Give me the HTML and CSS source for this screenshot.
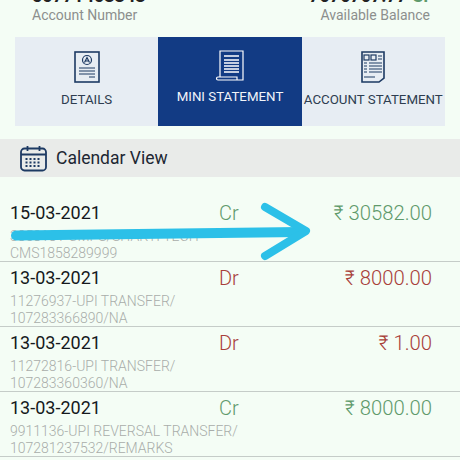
FILE: index.html
```html
<!DOCTYPE html>
<html>
<head>
  <title>Mini Statement</title>
  <link rel="stylesheet" href="styles.css">
</head>
<body>
  <div id="account-info">
    <div class="info-left">
      <div class="info-value">50771403343</div>
      <div class="info-label">Account Number</div>
    </div>
    <div class="info-right">
      <div class="info-value">7676767.77 <span class="green">Cr</span></div>
      <div class="info-label">Available Balance</div>
    </div>
  </div>

  <div id="tabs">
    <div class="tab">
      <svg class="tab-icon" width="26" height="32" viewBox="0 0 26 32" fill="none" stroke="#1d3a63" stroke-width="1.2">
        <rect x="1" y="1" width="24" height="30" stroke-width="1.6"/>
        <circle cx="13" cy="9" r="4.5"/>
        <path d="M10.500 11.500l2.500-5 2.500 5M11.500 10h3"/>
        <path d="M5 17h16M5 20h16M5 23h16M15 26h6"/>
      </svg>
      <div class="tab-label">DETAILS</div>
    </div>
    <div class="tab active">
      <svg class="tab-icon" width="30" height="32" viewBox="0 0 30 32" fill="none" stroke="#fff" stroke-width="1.2">
        <path d="M5 27V1h23v29H3a1.500 1.500 0 0 1 0-3h19v3"/>
        <path d="M9 6h15M9 10h15M9 13h15M9 16h15M9 19h15M9 22h15" stroke-width="1.6"/>
      </svg>
      <div class="tab-label">MINI STATEMENT</div>
    </div>
    <div class="tab">
      <svg class="tab-icon" width="24" height="32" viewBox="0 0 24 32" fill="none" stroke="#1d3a63" stroke-width="1.2">
        <path d="M1 1h22v26l-5 4H1z" stroke-width="1.6"/>
        <rect x="3" y="4" width="5" height="5"/>
        <rect x="10" y="4" width="5" height="5"/>
        <path d="M17 5h4M17 8h4M8 12h13M8 15h13M8 18h13M8 21h13M3 12h3M3 15h3M3 18h3M3 21h3M3 26h11"/>
      </svg>
      <div class="tab-label">ACCOUNT STATEMENT</div>
    </div>
  </div>

  <div id="calendar-bar">
    <svg width="27" height="27" viewBox="0 0 27 27" fill="none" stroke="#1d3a63" stroke-width="1.8">
      <rect x="1" y="3.500" width="25" height="22" rx="3.500"/>
      <path d="M1 9.500h25M7.500 1v5M19.500 1v5"/>
      <path d="M5.500 14h16M5.500 17.500h16M5.500 21h16" stroke-width="2" stroke-dasharray="2 2"/>
    </svg>
    <span>Calendar View</span>
  </div>

  <div id="statement">
    <div class="row">
      <div class="row-top">
        <div class="date">15-03-2021</div>
        <div class="type green">Cr</div>
        <div class="amount green">₹ 30582.00</div>
      </div>
      <div class="desc">3858181-CMPS/SHAKTI TECH<br>CMS1858289999</div>
    </div>
    <div class="row">
      <div class="row-top">
        <div class="date">13-03-2021</div>
        <div class="type red">Dr</div>
        <div class="amount red">₹ 8000.00</div>
      </div>
      <div class="desc">11276937-UPI TRANSFER/<br>107283366890/NA</div>
    </div>
    <div class="row">
      <div class="row-top">
        <div class="date">13-03-2021</div>
        <div class="type red">Dr</div>
        <div class="amount red">₹ 1.00</div>
      </div>
      <div class="desc">11272816-UPI TRANSFER/<br>107283360360/NA</div>
    </div>
    <div class="row">
      <div class="row-top">
        <div class="date">13-03-2021</div>
        <div class="type green">Cr</div>
        <div class="amount green">₹ 8000.00</div>
      </div>
      <div class="desc">9911136-UPI REVERSAL TRANSFER/<br>107281237532/REMARKS</div>
    </div>

    <!-- hand drawn arrow on top of the first row -->
    <svg id="arrow" width="320" height="70" viewBox="0 0 320 70" fill="none" stroke="#2cc0e8" stroke-linecap="round" stroke-linejoin="round">
      <path d="M16 38.500 L300 35" stroke-width="10"/>
      <path d="M265 10 L306 34 L265 59" stroke-width="8"/>
    </svg>
  </div>
</body>
</html>
```

FILE: styles.css
```css
body {
  font-family: Roboto, "Liberation Sans", sans-serif;
  background-color: #f4fdf5;
  color: #111;
  margin: 0;
  width: 460px;
  height: 460px;
  overflow: hidden;
}

.green {
  color: #5f9a6b;
}

.red {
  color: #a8403a;
}

#account-info {
  display: flex;
  justify-content: space-between;
  padding: 0 30px 0 32px;
  margin-top: -15px;
  height: 52px;
}

.info-right {
  text-align: right;
}

.info-value {
  font-size: 18px;
  line-height: 21px;
  font-weight: bold;
  color: #222;
}

.info-label {
  font-size: 14px;
  line-height: 18px;
  margin-top: 0;
  color: #8c8f8d;
}

#tabs {
  display: flex;
  margin: 0 15px;
  height: 89px;
  background-color: #e7edf3;
}

.tab {
  flex: 1 1 0;
  min-width: 0;
  display: flex;
  flex-direction: column;
  align-items: center;
  padding-top: 14px;
  box-sizing: border-box;
  color: #2e3d50;
}

.tab.active {
  background-color: #123b84;
  color: #f1f4fa;
  padding-top: 13px;
}

.tab-icon {
  height: 32px;
  flex-shrink: 0;
}

.tab-label {
  font-size: 13.300px;
  line-height: 16px;
  margin-top: 9px;
  white-space: nowrap;
}

.tab.active .tab-label {
  margin-top: 7px;
}

#calendar-bar {
  display: flex;
  align-items: center;
  gap: 9px;
  margin-top: 13px;
  height: 38px;
  padding-left: 20px;
  background-color: #e9ebe9;
  font-size: 17.500px;
  color: #1d2733;
}

#statement {
  position: relative;
  margin-top: 20px;
}

.row {
  height: 65px;
  box-sizing: border-box;
  padding: 5px 28px 0 10px;
  border-bottom: 1px solid #c5ccc8;
}

.row-top {
  display: flex;
  align-items: center;
  height: 22px;
}

.date {
  width: 209px;
  margin-top: -2px;
  font-size: 18px;
  color: #15191c;
}

.type {
  font-size: 20px;
  font-weight: 300;
}

.amount {
  flex: 1;
  text-align: right;
  font-size: 20.300px;
  font-weight: 300;
}

.desc {
  font-size: 14px;
  line-height: 17px;
  margin-top: 4px;
  color: #a9adaa;
  font-weight: 300;
  white-space: nowrap;
}

#arrow {
  position: absolute;
  top: 0;
  left: 0;
}
```
